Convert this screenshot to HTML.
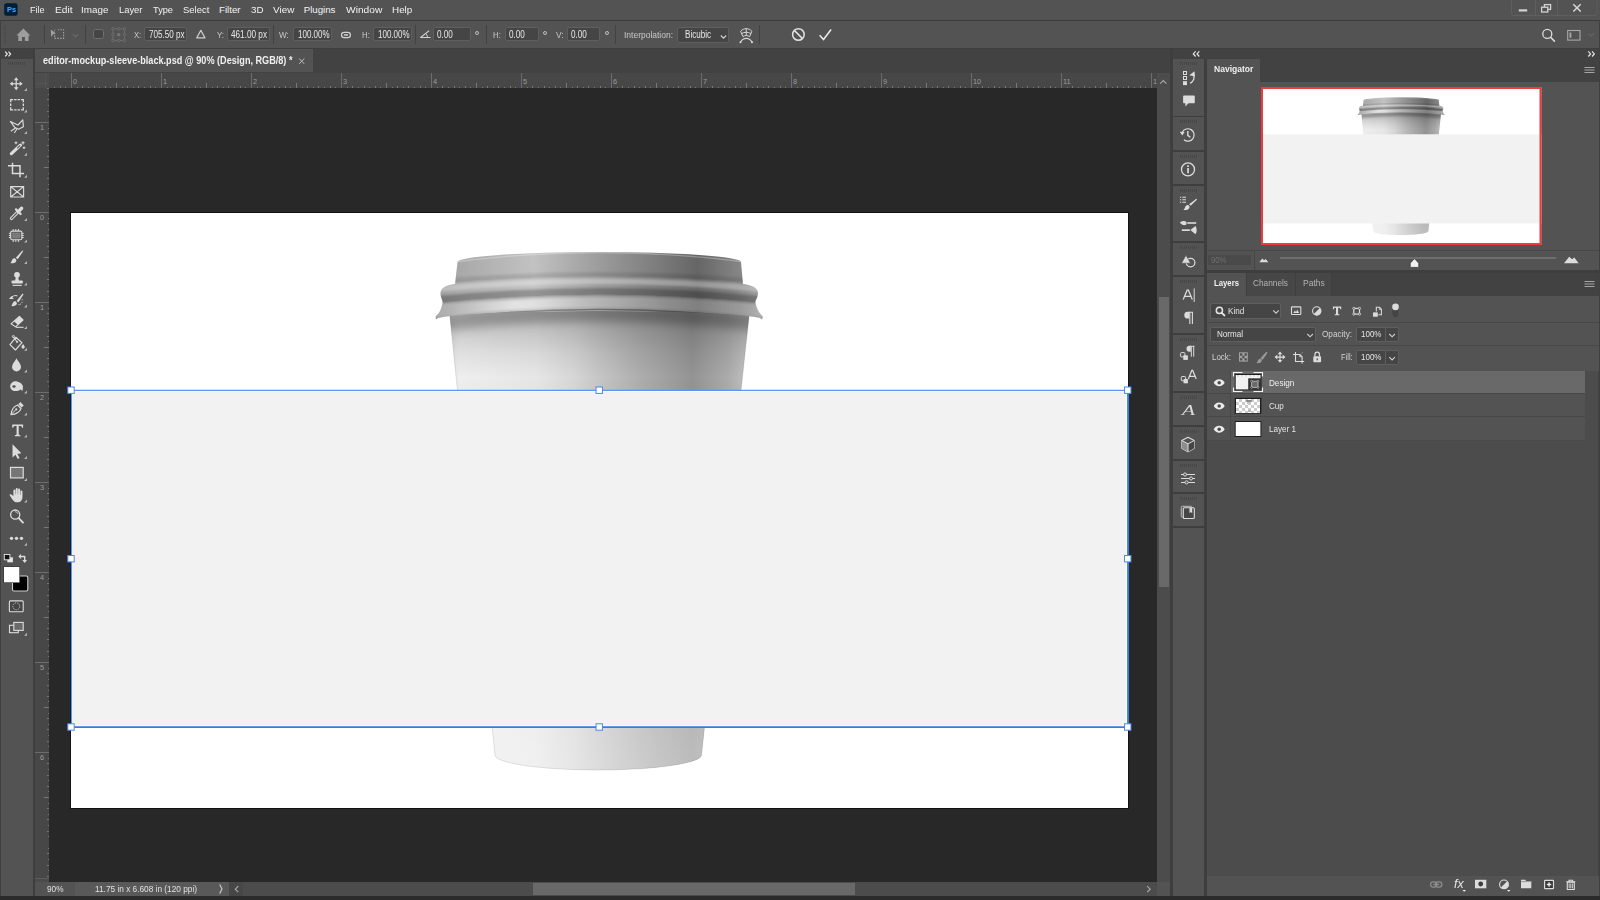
<!DOCTYPE html>
<html lang="en"><head><meta charset="utf-8"><title>editor-mockup-sleeve-black.psd</title>
<style>
html,body{margin:0;padding:0;}
body{width:1600px;height:900px;overflow:hidden;position:relative;background:#535353;font-family:"Liberation Sans",sans-serif;font-size:10px;color:#dcdcdc;}
body>div,body>svg{position:absolute;box-sizing:border-box;}
div div{position:absolute;box-sizing:border-box;}
.t{position:absolute;white-space:pre;line-height:1;transform-origin:0 50%;display:block;}
.f{background:#454545;border:1px solid #5f5f5f;border-radius:2px;}
svg{display:block;overflow:visible;}

</style></head>
<body>
<svg width="0" height="0" style="position:absolute;left:0;top:0">
<defs>
<linearGradient id="lidH" x1="0" x2="1" y1="0" y2="0">
<stop offset="0" stop-color="#9a9a9a"/><stop offset="0.067" stop-color="#a8a8a8"/><stop offset="0.30" stop-color="#c2c2c2"/><stop offset="0.50" stop-color="#9c9c9c"/><stop offset="0.80" stop-color="#666666"/><stop offset="0.93" stop-color="#868686"/><stop offset="1" stop-color="#a2a2a2"/>
</linearGradient>
<linearGradient id="bodyH" x1="0" x2="1" y1="0" y2="0"><stop offset="0" stop-color="#d8d8d8"/><stop offset="0.06" stop-color="#eeeeee"/><stop offset="0.30" stop-color="#e6e6e6"/><stop offset="0.42" stop-color="#d6d6d6"/><stop offset="0.50" stop-color="#c5c5c5"/><stop offset="0.62" stop-color="#aeaeae"/><stop offset="0.79" stop-color="#939393"/><stop offset="0.90" stop-color="#ababab"/><stop offset="1" stop-color="#d0d0d0"/></linearGradient>
<linearGradient id="bodyV" x1="0" x2="0" y1="0" y2="1"><stop offset="0" stop-color="#000" stop-opacity="0.30"/><stop offset="0.06" stop-color="#000" stop-opacity="0.16"/><stop offset="0.11" stop-color="#000" stop-opacity="0.06"/><stop offset="0.16" stop-color="#000" stop-opacity="0"/><stop offset="0.5" stop-color="#fff" stop-opacity="0.12"/><stop offset="1" stop-color="#fff" stop-opacity="0.40"/></linearGradient>
<clipPath id="lidc"><path d="M457.5 262 A141.75 10 0 0 1 741 262 L743 284 C752 285 758 288 758 293 C758 298 755 300 755.5 303 C757 310 760 314 763 316.5 L762 319.5 A163 8.5 0 0 0 436 319.5 L435.5 316.5 C438.5 314 441.5 310 442.5 303 C443 300 440.5 298 440.5 293 C440.5 288 446 285 455 284 Z"/></clipPath>
<clipPath id="bodyc"><path d="M449 308 L750 308 L701.5 755 A103.25 15 0 0 1 495 755 Z"/></clipPath>
<filter id="bl1" x="-5%" y="-50%" width="110%" height="200%"><feGaussianBlur stdDeviation="1.3"/></filter>
<filter id="bl4" x="-5%" y="-100%" width="110%" height="300%"><feGaussianBlur stdDeviation="4"/></filter>
<linearGradient id="lipHL" x1="0" x2="1" y1="0" y2="0"><stop offset="0.08" stop-color="#fff" stop-opacity="0"/><stop offset="0.26" stop-color="#fff" stop-opacity="0.5"/><stop offset="0.45" stop-color="#fff" stop-opacity="0.12"/><stop offset="0.7" stop-color="#fff" stop-opacity="0"/></linearGradient>
<symbol id="cup" viewBox="71 213 1057 595" preserveAspectRatio="none">
<rect x="71" y="213" width="1057" height="595" fill="#fff"/>
<g clip-path="url(#bodyc)">
<rect x="440" y="300" width="320" height="480" fill="url(#bodyH)"/>
<rect x="440" y="300" width="320" height="480" fill="url(#bodyV)"/>
<g filter="url(#bl4)"><path d="M425 318 Q599 294 773 318 L773 333 Q599 311 425 333 Z" fill="#000" fill-opacity="0.22"/></g>
</g>
<path d="M449 308 L750 308 L701.5 755 A103.25 15 0 0 1 495 755 Z" fill="none" stroke="#000" stroke-opacity="0.10" stroke-width="1"/>
<path d="M457.5 262 A141.75 10 0 0 1 741 262 L743 284 C752 285 758 288 758 293 C758 298 755 300 755.5 303 C757 310 760 314 763 316.5 L762 319.5 A163 8.5 0 0 0 436 319.5 L435.5 316.5 C438.5 314 441.5 310 442.5 303 C443 300 440.5 298 440.5 293 C440.5 288 446 285 455 284 Z" fill="url(#lidH)"/>
<g clip-path="url(#lidc)">
<g filter="url(#bl1)">
<path d="M425 280 Q599 264 773 280 L773 286 Q599 270 425 286 Z" fill="#000" fill-opacity="0.10"/>
<path d="M425 286.5 Q599 270.5 773 286.5 L773 293.3 Q599 274.7 425 293.3 Z" fill="#fff" fill-opacity="0.30"/>
<path d="M425 297.3 Q599 278.7 773 297.3 L773 305.3 Q599 286.7 425 305.3 Z" fill="#000" fill-opacity="0.24"/>
<path d="M425 305.8 Q599 287.2 773 305.8 L773 318.7 Q599 297.3 425 318.7 Z" fill="#fff" fill-opacity="0.17"/>
<path d="M425 307.3 Q599 288.7 773 307.3 L773 317.7 Q599 296.3 425 317.7 Z" fill="url(#lipHL)"/>
</g>
<path d="M425 320.6 Q599 298.6 773 320.6" fill="none" stroke="#000" stroke-opacity="0.30" stroke-width="1.5"/>
<path d="M425 322 Q599 300 773 322" fill="none" stroke="#fff" stroke-opacity="0.25" stroke-width="1.2"/>
<path d="M425 266 Q599 239.2 773 266" fill="none" stroke="#fff" stroke-opacity="0.28" stroke-width="1.3"/>
</g>
<rect x="71" y="391" width="1057" height="336" fill="#f2f2f2"/>
</symbol>
</defs>
</svg>

<div style="left:0px;top:0px;width:1600px;height:20px;background:#535353;"></div>
<div style="left:0px;top:20px;width:1600px;height:1px;background:#3d3d3d;"></div>
<div style="left:0px;top:21px;width:1600px;height:27px;background:#535353;"></div>
<div style="left:0px;top:48px;width:1600px;height:852px;background:#3e3e3e;"></div>
<div style="left:0px;top:49px;width:33px;height:10px;background:#424242;"></div>
<div style="left:0px;top:59px;width:33px;height:837px;background:#535353;"></div>
<svg style="left:0;top:0" width="36" height="900" viewBox="0 0 36 900" fill="#dcdcdc" stroke="none">
<!-- header chevrons -->
<path d="M5.200 51.700l2.100 2.300-2.100 2.300M8.500 51.700l2.100 2.300-2.100 2.300" fill="none" stroke="#e6e6e6" stroke-width="1.2"/>
<!-- move -->
<path d="M16.200 77.200l2.300 3h-4.600zM16.200 90.300l-2.300-3h4.600zM9.700 83.800l3-2.300v4.600zM22.700 83.800l-3 2.300v-4.600z"/>
<rect x="15.600" y="79.500" width="1.200" height="8.600"/><rect x="11.900" y="83.200" width="8.600" height="1.200"/>
<!-- marquee -->
<path d="M10.700 102.300V99.600h2.500M14.200 99.600h2.400M17.600 99.600h2.400M21 99.600h2.300v2.700M23.300 103.600v2.400M23.300 107.200v2.600H21M20 109.800h-2.400M16.600 109.800h-2.400M13.200 109.800h-2.500v-2.600M10.700 106v-2.400" fill="none" stroke="#dcdcdc" stroke-width="1.300"/>
<!-- poly lasso -->
<path d="M10.4 121.4L18 125l4.8-5.2.6 7-4.8 2.5-3.7-1.7z" fill="none" stroke="#dcdcdc" stroke-width="1.15" stroke-linejoin="round"/>
<path d="M15.6 128l-4.8 3.3M16.9 129l-2.6 4" fill="none" stroke="#dcdcdc" stroke-width="1.1"/>
<!-- wand -->
<path d="M11.4 153.6l9-8.4" fill="none" stroke="#dcdcdc" stroke-width="3.2" stroke-linecap="round"/>
<path d="M17.6 147.8l2.2-2" fill="none" stroke="#535353" stroke-width="1.1" stroke-linecap="round"/>
<path d="M16 141.4v2.8M14.6 142.8h2.8M23 141.2v3.2M21.4 142.8h3.2M24 146.4v2.6M22.7 147.7h2.6" fill="none" stroke="#dcdcdc" stroke-width="1.1"/>
<!-- crop -->
<path d="M12.5 162.8v10.7H24M8 165.8h12v11.4" fill="none" stroke="#dcdcdc" stroke-width="1.5"/>
<!-- frame -->
<path d="M10.7 186.6h12.9v10.4H10.7zM10.7 186.6l12.9 10.4M23.6 186.6L10.7 197" fill="none" stroke="#dcdcdc" stroke-width="1.15"/>
<!-- eyedropper -->
<path d="M11.5 218.4l6-6" fill="none" stroke="#dcdcdc" stroke-width="3.3" stroke-linecap="round"/>
<path d="M11.6 218.3l5.6-5.6" fill="none" stroke="#535353" stroke-width="1.2" stroke-linecap="round"/>
<path d="M16 209.4l4.6 4.6" fill="none" stroke="#dcdcdc" stroke-width="2.3" stroke-linecap="round"/>
<path d="M18.3 211.6l3.3-3.3" fill="none" stroke="#dcdcdc" stroke-width="3.4" stroke-linecap="round"/>
<!-- patch/object -->
<rect x="10.7" y="231.1" width="11.2" height="8.7" rx="1.6" fill="none" stroke="#dcdcdc" stroke-width="1.1"/>
<rect x="12.1" y="232.5" width="8.4" height="5.9" rx="0.8" fill="#7a7a7a"/>
<path d="M13.2 229v2M15.8 229v2M18.4 229v2M13.2 240v2M15.8 240v2M18.4 240v2M8.9 233.4h2M8.9 235.5h2M8.9 237.5h2M21.7 233.4h2M21.7 235.5h2M21.7 237.5h2" fill="none" stroke="#dcdcdc" stroke-width="1"/>
<!-- brush -->
<path d="M22.4 250.4l.9.7-5.6 8.2-1.9-1.5z"/>
<path d="M15.2 258.4c1.8 1.2 1.5 3.4-.5 4.3-1.6.7-3.4.6-4.4.5 1.5-1.2 1.2-2.6 2.2-3.9.7-.9 1.8-1.5 2.7-.9z"/>
<!-- stamp -->
<circle cx="17" cy="274.8" r="2.9"/><path d="M15.9 277l-.9 4h4l-.9-4z"/><rect x="11.6" y="280.5" width="11.2" height="3.1" rx="0.8"/><rect x="12.6" y="284.8" width="9.2" height="1.1"/>
<!-- history brush -->
<path d="M22.6 293.6l.9.7-5 8-1.9-1.4z"/>
<path d="M15.8 301.4c1.7 1.2 1.4 3.3-.5 4.2-1.5.7-3.3.6-4.2.5 1.4-1.2 1.1-2.5 2.1-3.8.7-.9 1.7-1.5 2.6-.9z"/>
<path d="M9 299l2.4-2.9 2.4 2.9z"/><path d="M12 296.8c1.6-1.3 3.6-1.5 5.4-.9" fill="none" stroke="#dcdcdc" stroke-width="1"/>
<circle cx="22.2" cy="299.8" r=".55"/><circle cx="22" cy="302.2" r=".55"/><circle cx="20.6" cy="304" r=".55"/><circle cx="19" cy="304.6" r=".55"/>
<!-- eraser -->
<path d="M19.4 316.3l3.6 3.7-7.4 6.9-4.6-3.1z" fill="none" stroke="#dcdcdc" stroke-width="1.1" stroke-linejoin="round"/>
<path d="M19.4 316.3l3.6 3.7-5.2 4.8-3.9-3.5z"/>
<path d="M16 327.3h7.6" fill="none" stroke="#dcdcdc" stroke-width="1.1"/>
<!-- bucket -->
<path d="M15.8 337.3l6.2 5.4-6.6 7.3L10 344.6z" fill="none" stroke="#dcdcdc" stroke-width="1.15" stroke-linejoin="round"/>
<path d="M13.4 336.8l3.7 5.2" fill="none" stroke="#dcdcdc" stroke-width="1.1"/><circle cx="13.4" cy="336.6" r="1.1" fill="none" stroke="#dcdcdc" stroke-width=".9"/><circle cx="17.1" cy="342" r="1"/>
<path d="M23.1 344c.9 1.3 1.6 2.1 1.6 3.1a1.6 1.6 0 0 1-3.2 0c0-1 .7-1.8 1.6-3.100z"/>
<!-- blur drop -->
<path d="M16.5 358.3c1.4 3.100 4.500 5.600 4.500 8.600a4.500 4.500 0 0 1-9 0c0-3 3.100-5.500 4.500-8.600z"/>
<!-- sponge -->
<path d="M10.200 386c.3-3.500 3.800-5.200 6.800-4.600 3 .5 5.500 2.600 6 5.100l-.5 4.500-2-1.500c-2.500 2-7.500 2-9 0-1-1-1.400-2.200-1.300-3.500z"/>
<ellipse cx="14" cy="386.400" rx="1.700" ry="1.250" fill="#535353"/>
<!-- pen -->
<path d="M11 414.600c.5-4.600 2.500-8.100 6.500-9.600l3.500 3.500c-1.500 4-5 5.800-10 6.100z" fill="none" stroke="#dcdcdc" stroke-width="1.200" stroke-linejoin="round"/>
<path d="M11.300 414.300l4.700-4.700" fill="none" stroke="#dcdcdc" stroke-width="1"/><circle cx="16.300" cy="409.300" r="1.100"/>
<path d="M18.300 404.200l2.100-2.100 3.300 3.300-2.100 2.100z"/>
<!-- T -->
<path d="M12.200 424.500h10.900v3.300h-1.100c-.1-1.300-.5-1.800-1.800-1.800h-1.500v8c0 .8.400 1.100 1.700 1.200v1h-5.500v-1c1.300-.1 1.700-.4 1.700-1.200v-8h-1.500c-1.300 0-1.700.5-1.800 1.800h-1.100z"/>
<!-- path select -->
<path d="M12.500 444.200v13.400l3-2.800 2.200 4.300 1.900-1-2.200-4.200 4-.6z"/>
<!-- rectangle -->
<rect x="10.500" y="467.400" width="12.700" height="10.500" fill="#767676" stroke="#dcdcdc" stroke-width="1.200"/>
<!-- hand -->
<path d="M13.400 496v-5.600a1 1 0 0 1 2 0v3.800h.35v-5.300a1 1 0 0 1 2 0v5.300h.35v-4.800a1 1 0 0 1 2 0v5.300h.35v-3.300a1 1 0 0 1 2 0v5.600c0 3.200-1.700 5.300-4.900 5.300-2.800 0-4.200-1.400-5.500-3.400l-2.400-3.600c-.4-.9.800-1.600 1.600-.8z"/>
<!-- zoom -->
<circle cx="15.200" cy="514.600" r="4.600" fill="none" stroke="#dcdcdc" stroke-width="1.300"/>
<path d="M18.700 518.100l4.300 4.500" fill="none" stroke="#dcdcdc" stroke-width="1.900" stroke-linecap="round"/>
<path d="M14.800 511.700c1.600-.2 2.900.9 3.200 2.300" fill="none" stroke="#dcdcdc" stroke-width=".8"/>
<!-- dots -->
<circle cx="11.500" cy="538.300" r="1.650"/><circle cx="16.500" cy="538.300" r="1.650"/><circle cx="21.500" cy="538.300" r="1.650"/>
<!-- corner triangles -->
<g fill="#b4b4b4">
<path d="M27 88v3h-3zM27 109.500v3h-3zM27 131v3h-3zM27 152.800v3h-3zM27 174.800v3h-3zM27 217.900v3h-3zM27 239.500v3h-3zM27 261v3h-3zM27 282.600v3h-3zM27 304.600v3h-3zM27 326v3h-3zM27 347.700v3h-3zM27 369.600v3h-3zM27 390.600v3h-3zM27 412.600v3h-3zM27 434.600v3h-3zM27 456v3h-3zM27 478v3h-3zM27 499.500v3h-3zM27 542.800v3h-3zM27 632.700v3h-3z"/>
</g>
<!-- mini default colours -->
<rect x="7.300" y="557.300" width="5.600" height="5" fill="#e6e6e6"/><rect x="4.300" y="554.500" width="5.600" height="5.300" fill="#111" stroke="#e6e6e6" stroke-width=".9"/>
<!-- swap arrows -->
<path d="M18.300 556.500l2.600-2.400v1.700h3.700c.5 0 .8.300.8.800v3.500h1.700l-2.400 2.800-2.400-2.800h1.700v-2.900h-3.100v1.700z"/>
<!-- swatches -->
<rect x="12.500" y="576" width="15.300" height="15" rx="1.500" fill="#000" stroke="#cfcfcf" stroke-width="1.100"/>
<rect x="3.200" y="566.300" width="16.800" height="16.700" fill="#3a3a3a"/>
<rect x="4" y="567" width="15.300" height="15.300" fill="#fff"/>
<!-- quick mask -->
<rect x="9.400" y="600.900" width="13.800" height="10.800" rx="1" fill="#454545" stroke="#dcdcdc" stroke-width="1.100"/>
<circle cx="16.300" cy="606.300" r="3.500" fill="none" stroke="#bdbdbd" stroke-width="1" stroke-dasharray="1.400 1"/>
<!-- screen mode -->
<rect x="9.500" y="625.300" width="8.800" height="7.400" fill="#535353" stroke="#dcdcdc" stroke-width="1.100"/>
<rect x="13.800" y="622.400" width="9.400" height="8" fill="#6a6a6a" stroke="#dcdcdc" stroke-width="1.100"/>
</svg>

<div style="left:8px;top:62px;width:17px;height:3px;background:repeating-linear-gradient(90deg,#474747 0 1px,transparent 1px 2px);"></div>
<div style="left:35px;top:49px;width:1135px;height:24px;background:#424242;"></div>
<div style="left:35px;top:49px;width:278px;height:24px;background:#535353;"></div>
<div style="left:35px;top:72px;width:1135px;height:1px;background:#424242;"></div>
<div style="left:35px;top:73px;width:1122px;height:15px;background:#474747;"></div>
<div style="left:35px;top:88px;width:14px;height:794px;background:#474747;"></div>
<div style="left:35px;top:73px;width:14px;height:15px;background:#4d4d4d;"></div>
<div style="left:35px;top:878px;width:14px;height:1px;background:#5c5c5c;"></div>
<div style="left:35px;top:879px;width:14px;height:3px;background:#4b4b4b;"></div>
<div style="left:49px;top:88px;width:1108px;height:794px;background:#282828;"></div>
<div style="left:1157px;top:73px;width:13px;height:809px;background:#464646;z-index:3;background-image:radial-gradient(circle,#525252 0.6px,transparent 0.8px);background-size:2px 2px;"></div>
<div style="left:1159px;top:297px;width:10px;height:290px;background:#696969;z-index:4;"></div>
<svg style="left:0;top:0;z-index:5" width="1180" height="900" viewBox="0 0 1180 900" fill="none" stroke="#a8a8a8" stroke-width="1.2"><path d="M1160.200 83.600l3.100-3 3.100 3M1147.200 886.200l3 3-3 3M238.300 886.200l-3 3 3 3"/><path d="M219.700 884.600l2.300 4.400-2.300 4.400" stroke="#d0d0d0" stroke-width="1.100"/><path d="M299.200 58.500l5 5.400M304.200 58.500l-5 5.400" stroke="#bdbdbd" stroke-width="1"/></svg>
<div style="left:35px;top:882px;width:1135px;height:14px;background:#474747;"></div>
<div style="left:35px;top:882px;width:40px;height:14px;background:#535353;"></div>
<div style="left:75px;top:882px;width:154px;height:14px;background:#595959;"></div>
<div style="left:243px;top:882px;width:914px;height:14px;background:#464646;background-image:radial-gradient(circle,#525252 0.6px,transparent 0.8px);background-size:2px 2px;"></div>
<div style="left:533px;top:883px;width:322px;height:12px;background:#696969;"></div>
<div style="left:1157px;top:882px;width:13px;height:14px;background:#535353;"></div>
<div style="left:70px;top:212px;width:1059px;height:597px;background:#121212;"></div>
<svg style="left:71px;top:213px" width="1057" height="595"><use href="#cup" x="0" y="0" width="1057" height="595"/></svg>
<svg style="left:0;top:0" width="1160" height="900" viewBox="0 0 1160 900" fill="none"><path d="M72.500 391.500H1126.500V725.800H72.500z" stroke="#fffdf2" stroke-width="1"/><path d="M71.500 390.500V727" stroke="#5c94f4" stroke-width="1.200"/><path d="M71 390.400H1128.500" stroke="#5c94f4" stroke-width="1.100"/><path d="M1128 390V728" stroke="#3f83ec" stroke-width="1.900"/><path d="M71 727.100H1129" stroke="#2f7de8" stroke-width="1.900"/><rect x="67.80" y="387.00" width="6.4" height="6.4" fill="#fff" stroke="#4a86ee" stroke-width="1"/><rect x="67.80" y="555.50" width="6.4" height="6.4" fill="#fff" stroke="#4a86ee" stroke-width="1"/><rect x="67.80" y="723.80" width="6.4" height="6.4" fill="#fff" stroke="#4a86ee" stroke-width="1"/><rect x="596.05" y="387.00" width="6.4" height="6.4" fill="#fff" stroke="#4a86ee" stroke-width="1"/><rect x="596.05" y="723.80" width="6.4" height="6.4" fill="#fff" stroke="#4a86ee" stroke-width="1"/><rect x="1124.55" y="387.00" width="6.4" height="6.4" fill="#fff" stroke="#4a86ee" stroke-width="1"/><rect x="1124.55" y="555.50" width="6.4" height="6.4" fill="#fff" stroke="#4a86ee" stroke-width="1"/><rect x="1124.55" y="723.80" width="6.4" height="6.4" fill="#fff" stroke="#4a86ee" stroke-width="1"/></svg>
<div style="left:1173px;top:49px;width:427px;height:10px;background:#424242;"></div>
<div style="left:1173px;top:59px;width:31px;height:57px;background:#535353;"></div>
<div style="left:1173px;top:117px;width:31px;height:33px;background:#535353;"></div>
<div style="left:1173px;top:152px;width:31px;height:32px;background:#535353;"></div>
<div style="left:1173px;top:186px;width:31px;height:55px;background:#535353;"></div>
<div style="left:1173px;top:243px;width:31px;height:32px;background:#535353;"></div>
<div style="left:1173px;top:277px;width:31px;height:56px;background:#535353;"></div>
<div style="left:1173px;top:335px;width:31px;height:56px;background:#535353;"></div>
<div style="left:1173px;top:393px;width:31px;height:32px;background:#535353;"></div>
<div style="left:1173px;top:427px;width:31px;height:32px;background:#535353;"></div>
<div style="left:1173px;top:461px;width:31px;height:31px;background:#535353;"></div>
<div style="left:1173px;top:494px;width:31px;height:32px;background:#535353;"></div>
<div style="left:1173px;top:528px;width:31px;height:368px;background:#535353;"></div>
<svg style="left:1170px;top:0" width="40" height="900" viewBox="1170 0 40 900" fill="none" stroke="none">
<path d="M1195.600 51.300l-2.300 2.600 2.300 2.600M1199.300 51.300l-2.300 2.600 2.300 2.600" stroke="#e6e6e6" stroke-width="1.200"/>
<!-- actions/history states -->
<rect x="1183.500" y="71.500" width="3" height="3" stroke="#dcdcdc" stroke-width="1"/>
<rect x="1183.500" y="76.500" width="3" height="3" stroke="#dcdcdc" stroke-width="1"/>
<rect x="1183" y="81.200" width="4" height="3.900" fill="#dcdcdc"/>
<path d="M1190.300 83.400c3.600-2.300 5-6.300 2.600-10" stroke="#dcdcdc" stroke-width="1.300"/>
<path d="M1189.300 75.200l5.200-4 .5 5.200z" fill="#dcdcdc"/>
<!-- comment -->
<path d="M1184.200 95.500h9.500c.7 0 1.100.4 1.100 1.100v5.600c0 .7-.4 1.100-1.100 1.100h-5.300l-3 3.200v-3.200h-1.200c-.7 0-1.100-.4-1.100-1.100v-5.600c0-.7.400-1.100 1.100-1.100z" fill="#dcdcdc"/>
<!-- history -->
<path d="M1182.300 132.300a6.200 6.200 0 1 1 1.600 7.400" stroke="#dcdcdc" stroke-width="1.200"/>
<path d="M1179.800 131.800l4.800.2-2.300 3.600z" fill="#dcdcdc"/>
<path d="M1187.800 131v4.300l2.500 2" stroke="#dcdcdc" stroke-width="1.400"/>
<!-- info -->
<circle cx="1188" cy="169.400" r="6.500" stroke="#dcdcdc" stroke-width="1.300"/>
<rect x="1187.200" y="165.300" width="1.700" height="1.700" fill="#dcdcdc"/><rect x="1187.200" y="168" width="1.700" height="5.200" fill="#dcdcdc"/>
<!-- brush settings -->
<path d="M1180 197.300h1.200M1182.300 197.300h3.700M1180 199.800h1.200M1182.300 199.800h3.700M1180 202.300h1.200M1182.300 202.300h3.700" stroke="#dcdcdc" stroke-width="1.100"/>
<path d="M1196.300 198.700l.8.900-6.500 6.200-1.500-1.600z" fill="#dcdcdc"/>
<path d="M1188.500 205.200c1.700 1.300 1.300 3.300-.5 4.200-1.500.7-3.300.7-4.600.5 1.400-1.100 1.300-2.300 2.200-3.600.7-1 1.900-1.700 2.900-1.100z" fill="#dcdcdc"/>
<!-- brushes -->
<path d="M1179.900 222.600c2-1.600 4.700-2.100 6.600-.6v2.600c-2.300 1.300-4.800.5-6.600-2z" fill="#dcdcdc"/><rect x="1187.300" y="222.200" width="8.900" height="1.600" fill="#dcdcdc"/>
<rect x="1181.800" y="229.300" width="8" height="1.700" fill="#dcdcdc"/><path d="M1190.300 230.100l5.200-4.200c1.600 2.600 1.600 5.800 0 8.400z" fill="#dcdcdc"/>
<!-- clone source -->
<circle cx="1190.600" cy="262.600" r="4.300" stroke="#dcdcdc" stroke-width="1.200"/>
<path d="M1186 255.300l4.500 7.900h-9z" fill="#dcdcdc" stroke="#535353" stroke-width=".6"/>
<!-- A| -->
<path d="M1183.200 299.500l3.900-9.300h1.300l3.900 9.300M1184.600 296.300h6.300" stroke="#dcdcdc" stroke-width="1.250"/>
<path d="M1194.200 288.500v13.500" stroke="#dcdcdc" stroke-width="1"/>
<!-- pilcrow -->
<path d="M1188.600 312.300h4.500M1189.800 312.300v11.700M1192.400 312.300v11.700" stroke="#dcdcdc" stroke-width="1.100"/>
<path d="M1189.300 311.800h-1.600a3.400 3.400 0 0 0 0 6.800h1.600z" fill="#dcdcdc"/>
<!-- para styles -->
<path d="M1190 346.300h4.500M1191.300 346.300v10.400M1193.700 346.300v10.400" stroke="#dcdcdc" stroke-width="1"/>
<path d="M1190.800 345.800h-1.300a3 3 0 0 0 0 6h1.300z" fill="#dcdcdc"/>
<rect x="1180.600" y="352.600" width="4.300" height="4.300" rx=".8" stroke="#dcdcdc" stroke-width="1"/>
<rect x="1183.300" y="355.300" width="4.600" height="4.600" fill="#dcdcdc"/>
<!-- char styles -->
<path d="M1188.300 379l3.500-8.600h.9l3.500 8.600M1189.500 376.300h5.500" stroke="#dcdcdc" stroke-width="1.200"/>
<rect x="1181.300" y="376.500" width="4.300" height="4.300" rx=".8" stroke="#dcdcdc" stroke-width="1"/>
<rect x="1183.600" y="379" width="4.300" height="4.300" fill="#dcdcdc"/>
<!-- cube -->
<path d="M1188 437.200l6.200 3.300v7.700l-6.200 3.600-6.200-3.600v-7.700z" stroke="#dcdcdc" stroke-width="1.100" stroke-linejoin="round"/>
<path d="M1181.800 440.500l6.200 3.400v7.900l-6.200-3.600z" fill="#8c8c8c"/><path d="M1188 443.900l6.200-3.400v7.700l-6.200 3.600z" fill="#454545"/>
<path d="M1181.800 440.500l6.200 3.400 6.200-3.400M1188 443.900v7.900" stroke="#dcdcdc" stroke-width="1"/>
<!-- adjustments -->
<path d="M1181 474.500h14M1181 478.500h14M1181 482.400h14" stroke="#dcdcdc" stroke-width="1.050"/>
<circle cx="1185" cy="474.500" r="1.550" fill="#535353" stroke="#dcdcdc" stroke-width="1"/><circle cx="1191" cy="478.500" r="1.550" fill="#535353" stroke="#dcdcdc" stroke-width="1"/><circle cx="1186.600" cy="482.400" r="1.550" fill="#535353" stroke="#dcdcdc" stroke-width="1"/>
<!-- libraries -->
<rect x="1181.300" y="506.300" width="10.500" height="11" rx="1" stroke="#bdbdbd" stroke-width="1"/>
<rect x="1183.300" y="507.800" width="11" height="10.700" rx="1" fill="#474747" stroke="#dcdcdc" stroke-width="1.100"/>
<path d="M1189.500 507.800h2.700v5.500l-1.350-1.200-1.350 1.200z" fill="#dcdcdc"/>
</svg>

<div style="left:1180px;top:62px;width:17px;height:3px;background:repeating-linear-gradient(90deg,#474747 0 1px,transparent 1px 2px);"></div>
<div style="left:1180px;top:120px;width:17px;height:3px;background:repeating-linear-gradient(90deg,#474747 0 1px,transparent 1px 2px);"></div>
<div style="left:1180px;top:155px;width:17px;height:3px;background:repeating-linear-gradient(90deg,#474747 0 1px,transparent 1px 2px);"></div>
<div style="left:1180px;top:189px;width:17px;height:3px;background:repeating-linear-gradient(90deg,#474747 0 1px,transparent 1px 2px);"></div>
<div style="left:1180px;top:246px;width:17px;height:3px;background:repeating-linear-gradient(90deg,#474747 0 1px,transparent 1px 2px);"></div>
<div style="left:1180px;top:280px;width:17px;height:3px;background:repeating-linear-gradient(90deg,#474747 0 1px,transparent 1px 2px);"></div>
<div style="left:1180px;top:338px;width:17px;height:3px;background:repeating-linear-gradient(90deg,#474747 0 1px,transparent 1px 2px);"></div>
<div style="left:1180px;top:396px;width:17px;height:3px;background:repeating-linear-gradient(90deg,#474747 0 1px,transparent 1px 2px);"></div>
<div style="left:1180px;top:430px;width:17px;height:3px;background:repeating-linear-gradient(90deg,#474747 0 1px,transparent 1px 2px);"></div>
<div style="left:1180px;top:464px;width:17px;height:3px;background:repeating-linear-gradient(90deg,#474747 0 1px,transparent 1px 2px);"></div>
<div style="left:1180px;top:497px;width:17px;height:3px;background:repeating-linear-gradient(90deg,#474747 0 1px,transparent 1px 2px);"></div>
<div style="left:1207px;top:59px;width:393px;height:23px;background:#424242;"></div>
<div style="left:1207px;top:59px;width:52.5px;height:23px;background:#535353;"></div>
<div style="left:1207px;top:82px;width:393px;height:188px;background:#535353;"></div>
<div style="left:1207px;top:250px;width:393px;height:1px;background:#474747;"></div>
<svg style="left:1261px;top:87px" width="280.5" height="158"><use href="#cup" x="0" y="0" width="280.5" height="158"/><rect x="1" y="1" width="278.5" height="156" fill="none" stroke="#ee3b3b" stroke-width="2"/></svg>
<div style="left:1208px;top:255px;width:43px;height:10px;background:#4a4a4a;"></div>
<div style="left:1254px;top:251px;width:1px;height:19px;background:#474747;"></div>
<div style="left:1280px;top:257px;width:276px;height:2px;background:#6e6e6e;"></div>
<div style="left:1207px;top:273px;width:393px;height:23px;background:#424242;"></div>
<div style="left:1207px;top:273px;width:39px;height:23px;background:#535353;"></div>
<div style="left:1246px;top:273px;width:50px;height:23px;background:#474747;border-left:1px solid #3f3f3f;border-right:1px solid #3f3f3f;"></div>
<div style="left:1296px;top:273px;width:36px;height:23px;background:#474747;border-right:1px solid #3f3f3f;"></div>
<div style="left:1207px;top:296px;width:393px;height:600px;background:#535353;"></div>
<div style="left:1207px;top:322px;width:393px;height:1px;background:#474747;"></div>
<div style="left:1207px;top:345px;width:393px;height:1px;background:#484848;"></div>
<div style="left:1207px;top:371px;width:393px;height:505px;background:#4c4c4c;"></div>
<div style="left:1207px;top:371px;width:378px;height:22px;background:#535353;"></div>
<div style="left:1231px;top:371px;width:354px;height:21.5px;background:#696969;"></div>
<div style="left:1207px;top:393px;width:378px;height:1px;background:#484848;"></div>
<div style="left:1207px;top:394px;width:378px;height:22px;background:#535353;"></div>
<div style="left:1207px;top:416px;width:378px;height:1px;background:#484848;"></div>
<div style="left:1207px;top:417px;width:378px;height:22.5px;background:#535353;"></div>
<div style="left:1207px;top:439.5px;width:378px;height:1px;background:#484848;"></div>
<div style="left:1230px;top:371px;width:1px;height:68px;background:#484848;"></div>
<div style="left:1585px;top:371px;width:13px;height:505px;background:#464646;background-image:radial-gradient(circle,#525252 0.6px,transparent 0.8px);background-size:2px 2px;"></div>
<div style="left:1598px;top:371px;width:2px;height:505px;background:#424242;"></div>
<div class="f" style="left:1210px;top:303px;width:71px;height:16px"></div>
<div class="f" style="left:1210px;top:327px;width:106px;height:15px"></div>
<div class="f" style="left:1356px;top:327px;width:30px;height:15px;border-radius:2px 0 0 2px"></div>
<div class="f" style="left:1385px;top:327px;width:14px;height:15px;border-radius:0 2px 2px 0"></div>
<div class="f" style="left:1356px;top:350px;width:30px;height:15px;border-radius:2px 0 0 2px"></div>
<div class="f" style="left:1385px;top:350px;width:14px;height:15px;border-radius:0 2px 2px 0"></div>
<svg style="left:1205px;top:0" width="395" height="900" viewBox="1205 0 395 900" fill="none" stroke="none">
<!-- header chevrons right -->
<path d="M1588.300 51.300l2.300 2.600-2.300 2.600M1592 51.300l2.300 2.600-2.300 2.600" stroke="#e6e6e6" stroke-width="1.200"/>
<!-- panel menus -->
<path d="M1584.500 67.500h10M1584.500 70h10M1584.500 72.500h10M1584.500 281.500h10M1584.500 284h10M1584.500 286.500h10" stroke="#a6a6a6" stroke-width="1.100"/>
<!-- navigator slider -->
<path d="M1259.300 262.300l3-3.700 1.800 1.600 1.600-1.200 2.600 3.300z" fill="#dcdcdc"/>
<path d="M1564 263.300l5.200-6.600 2.800 2.600 2.300-1.800 4.300 5.800z" fill="#dcdcdc"/>
<path d="M1414.500 258.600l4.300 4.600v3.200a1 1 0 0 1-1 1h-6.600a1 1 0 0 1-1-1v-3.200z" fill="#f2f2f2" stroke="#333" stroke-width=".8"/>
<!-- search icon -->
<circle cx="1219.400" cy="310.400" r="3.100" stroke="#e6e6e6" stroke-width="1.500"/>
<path d="M1221.700 312.800l2.800 2.700" stroke="#e6e6e6" stroke-width="1.800" stroke-linecap="round"/>
<path d="M1273.200 310.400l2.800 2.800 2.800-2.800M1307.300 334l2.800 2.800 2.800-2.800M1389.300 334l2.800 2.800 2.800-2.800M1389.300 357.200l2.800 2.800 2.800-2.800" stroke="#d0d0d0" stroke-width="1.100"/>
<!-- filter icons -->
<rect x="1291.500" y="306.900" width="9.300" height="7.600" rx=".6" stroke="#dcdcdc" stroke-width="1.100"/>
<path d="M1293.300 312.900l1.500-2.500 1.200 1.500 1.400-2.100 1.700 3.100z" fill="#dcdcdc"/>
<circle cx="1316.750" cy="311" r="4.200" stroke="#dcdcdc" stroke-width="1.100"/>
<path d="M1319.850 308.100a4.200 4.200 0 0 1-6 6z" fill="#dcdcdc"/>
<path d="M1332.900 306.500h8.300v2.700h-1c-.1-1-.4-1.400-1.400-1.400h-.7v5.600c0 .6.300.8 1.300.9v.9h-4.700v-.9c1-.1 1.300-.3 1.300-.9v-5.600h-.7c-1 0-1.300.4-1.400 1.400h-1z" fill="#dcdcdc"/>
<rect x="1353.800" y="308.400" width="5.700" height="5.700" stroke="#dcdcdc" stroke-width="1.200"/>
<g fill="#535353" stroke="#dcdcdc" stroke-width=".8"><circle cx="1353.800" cy="308.400" r="1.100"/><circle cx="1359.500" cy="308.400" r="1.100"/><circle cx="1353.800" cy="314.100" r="1.100"/><circle cx="1359.500" cy="314.100" r="1.100"/></g>
<path d="M1376.300 311.500v-4.300h3.300l1.800 1.900v5.700h-3" stroke="#dcdcdc" stroke-width="1.050"/>
<path d="M1379.300 307.200v2.200h2.100" stroke="#dcdcdc" stroke-width=".8"/>
<rect x="1373" y="312.400" width="4.800" height="4.300" fill="#dcdcdc"/>
<rect x="1391.800" y="303.800" width="7.400" height="14.300" rx="3.700" fill="#454545" stroke="#5c5c5c" stroke-width=".8"/>
<circle cx="1395.500" cy="306.900" r="3.300" fill="#dcdcdc"/>
<!-- lock icons -->
<rect x="1239" y="352.300" width="8.800" height="9.300" fill="#a2a2a2"/>
<path d="M1240 353.300h2.300v2.400h-2.300zM1244.500 353.300h2.300v2.400h-2.300zM1242.300 355.700h2.200v2.500h-2.200zM1240 358.200h2.300v2.400h-2.300zM1244.500 358.200h2.300v2.400h-2.300z" fill="#505050"/>
<path d="M1266.300 351.700l1.200 1-5 7.200-2-1.600z" fill="#9a9a9a"/>
<path d="M1260.600 358.800c1.700 1.100 1.500 3.100-.3 3.900-1.400.6-2.900.5-3.800.3 1.200-1 1.100-2.100 1.900-3.200.6-.8 1.400-1.400 2.200-1z" fill="#9a9a9a"/>
<path d="M1280 351.500l2.300 2.800h-4.600zM1280 362.700l-2.300-2.800h4.600zM1274.500 357.100l2.800-2.300v4.600zM1285.500 357.100l-2.800 2.300v-4.600z" fill="#dcdcdc"/>
<path d="M1280 353.500v7.200M1276.500 357.100h7" stroke="#dcdcdc" stroke-width="1.200"/>
<path d="M1295.500 352v9.500h8.700M1293 354.500h6.800l2.300 2.300v6.700" stroke="#dcdcdc" stroke-width="1.100"/>
<path d="M1299.800 354.500v2.300h2.300" stroke="#dcdcdc" stroke-width=".8"/>
<path d="M1301.500 353.300l1.300-1.300" stroke="#dcdcdc" stroke-width=".9" stroke-dasharray="1 .7"/>
<rect x="1313.300" y="356.300" width="7.800" height="6" rx=".7" fill="#dcdcdc"/>
<path d="M1314.900 356.300v-1.800a2.300 2.300 0 0 1 4.600 0v1.800" stroke="#dcdcdc" stroke-width="1.200"/>
<rect x="1316.600" y="358.300" width="1.300" height="2" fill="#535353"/>
<!-- eyes -->
<g id="eye1"><path d="M1213.700 382.800c2.500-4.600 8.500-4.600 11 0-2.500 4.600-8.500 4.600-11 0z" fill="#ececec"/><circle cx="1219.200" cy="382.800" r="1.750" fill="#4a4a4a"/></g>
<path d="M1213.700 406c2.500-4.600 8.500-4.600 11 0-2.500 4.600-8.500 4.600-11 0z" fill="#ececec"/><circle cx="1219.200" cy="406" r="1.750" fill="#4a4a4a"/>
<path d="M1213.700 429.200c2.500-4.600 8.500-4.600 11 0-2.500 4.600-8.500 4.600-11 0z" fill="#ececec"/><circle cx="1219.200" cy="429.200" r="1.750" fill="#4a4a4a"/>
<!-- design thumb -->
<rect x="1234.700" y="374" width="26.800" height="16.400" fill="#1e1e1e"/>
<rect x="1235.700" y="375" width="24.800" height="14.400" fill="#f4f4f4"/>
<path d="M1237 375h2v1.600h-2zM1241 375h2v1.600h-2zM1245 375h2v1.600h-2zM1249 375h2v1.600h-2zM1253 375h2v1.600h-2zM1257 375h2v1.600h-2z" fill="#d4d4d4"/>
<rect x="1236.500" y="377.200" width="11.500" height="11" fill="#f1f1f1"/>
<rect x="1248.200" y="378.300" width="12.800" height="11.600" fill="#333"/>
<rect x="1251.600" y="381.200" width="6.400" height="6.200" fill="#6a6a6a" stroke="#b4b4b4" stroke-width="1"/>
<g fill="#333" stroke="#b4b4b4" stroke-width=".7"><circle cx="1251.600" cy="381.200" r="1"/><circle cx="1258" cy="381.200" r="1"/><circle cx="1251.600" cy="387.400" r="1"/><circle cx="1258" cy="387.400" r="1"/></g>
<path d="M1233.500 376.500v-4h9M1253.500 372.500h9v4M1262.500 387.500v4h-9M1242.500 391.500h-9v-4" stroke="#f4f4f4" stroke-width="1.100"/>
<!-- cup thumb -->
<rect x="1234.700" y="397.800" width="26.700" height="15.800" fill="#1e1e1e"/>
<!-- layer1 thumb -->
<rect x="1234.700" y="421" width="26.700" height="16" fill="#1e1e1e"/>
<rect x="1235.700" y="422" width="24.700" height="14" fill="#fff"/>
<!-- bottom bar -->
<g stroke="#8e8e8e" stroke-width="1.200"><rect x="1430.600" y="881.800" width="6.300" height="5.300" rx="2.650"/><rect x="1435.500" y="881.800" width="6.300" height="5.300" rx="2.650"/></g>
<rect x="1433.300" y="883.800" width="5.800" height="1.300" fill="#8e8e8e"/>
<path d="M1462.500 890h3.500l-1.750 1.800zM1507 890h3.500l-1.750 1.800z" fill="#f0f0f0"/>
<rect x="1475" y="879.800" width="11.300" height="8.500" fill="#dcdcdc"/><circle cx="1480.700" cy="884" r="2.400" fill="#3c3c3c"/>
<circle cx="1504" cy="884.400" r="4.400" stroke="#dcdcdc" stroke-width="1.100"/>
<path d="M1507.200 881.300a4.400 4.400 0 0 1-6.300 6.300z" fill="#dcdcdc"/>
<path d="M1521 879.800h4.300l.7 1.300h5.300v7.200H1521z" fill="#dcdcdc"/>
<path d="M1521 881.600h10.300" stroke="#535353" stroke-width=".5"/>
<rect x="1544.600" y="880.300" width="8.900" height="8.400" rx=".6" fill="#383838" stroke="#dcdcdc" stroke-width="1.200"/>
<path d="M1549.050 882.300v4.400M1546.850 884.500h4.400" stroke="#f0f0f0" stroke-width="1.300"/>
<path d="M1566.300 881.800h9M1569 881.500v-1.200h3.600v1.200" stroke="#dcdcdc" stroke-width="1.100"/>
<path d="M1567.300 882.300h7v7.200h-7z" stroke="#dcdcdc" stroke-width="1.100"/>
<path d="M1569.200 883.500v4.800M1570.800 883.500v4.800M1572.400 883.500v4.800" stroke="#dcdcdc" stroke-width=".9"/>
</svg>

<div style="left:1235.7px;top:398.8px;width:24.7px;height:13.8px;background:#fff;background-image:linear-gradient(45deg,#ccc 25%,transparent 25%,transparent 75%,#ccc 75%),linear-gradient(45deg,#ccc 25%,transparent 25%,transparent 75%,#ccc 75%);background-size:6px 6px;background-position:0 0,3px 3px;"></div>
<div style="left:1245.5px;top:399.6px;width:6.5px;height:2.4px;background:#7a7a7a;border-radius:1px;opacity:.85;"></div>
<div style="left:1246.5px;top:402px;width:4.5px;height:1.5px;background:#c4c4c4;"></div>
<div style="left:1247.5px;top:409.8px;width:3.5px;height:1.8px;background:#b0b0b0;border-radius:0 0 1px 1px;"></div>
<div style="left:0px;top:21px;width:1px;height:875px;background:#404040;"></div>
<div style="left:1599px;top:21px;width:1px;height:875px;background:#404040;"></div>
<div style="left:0px;top:896px;width:1600px;height:4px;background:#2b2b2b;"></div>
<div class="f" style="left:144px;top:27px;width:43px;height:14px"></div>
<div class="f" style="left:227px;top:27px;width:43px;height:14px"></div>
<div class="f" style="left:293px;top:27px;width:39px;height:14px"></div>
<div class="f" style="left:373px;top:27px;width:39px;height:14px"></div>
<div class="f" style="left:433px;top:27px;width:38px;height:14px"></div>
<div class="f" style="left:505px;top:27px;width:34px;height:14px"></div>
<div class="f" style="left:567px;top:27px;width:33px;height:14px"></div>
<div class="f" style="left:677px;top:27px;width:52px;height:16px"></div>
<div class="f" style="left:93px;top:29px;width:11px;height:10px;border-radius:2.5px;border-color:#707070"></div>
<div style="left:44px;top:25px;width:1px;height:19px;background:#424242;"></div>
<div style="left:85px;top:25px;width:1px;height:19px;background:#424242;"></div>
<div style="left:273px;top:25px;width:1px;height:19px;background:#424242;"></div>
<div style="left:415px;top:25px;width:1px;height:19px;background:#424242;"></div>
<div style="left:486px;top:25px;width:1px;height:19px;background:#424242;"></div>
<div style="left:615px;top:25px;width:1px;height:19px;background:#424242;"></div>
<div style="left:759px;top:25px;width:1px;height:19px;background:#424242;"></div>
<svg style="left:0;top:0" width="1600" height="49" viewBox="0 0 1600 49" fill="none" stroke="none">
<!-- grip -->
<path d="M5 26v18" stroke="#484848" stroke-width="2" stroke-dasharray="1 1"/>
<!-- home -->
<path d="M23.400 28.600l7 6.900h-1.800v5.500h-3.700v-4h-2.900v4h-3.700v-5.500h-1.800z" fill="#9e9e9e"/>
<!-- transform icon -->
<path d="M50.800 29.700l5 3.900-2.900.5-1.400 2.600z" fill="#a2a2a2"/>
<rect x="54.600" y="29.700" width="9" height="8.700" stroke="#a2a2a2" stroke-width="1.100" stroke-dasharray="1.500 1.300"/>
<rect x="54.600" y="29.200" width="3.400" height="5" fill="#535353"/>
<path d="M50.800 29.700l5 3.900-2.900.5-1.400 2.600z" fill="#a2a2a2"/>
<path d="M72.800 34.300l2.600 2.500 2.600-2.500" stroke="#6c6c6c" stroke-width="1.100"/>
<!-- ref point grid -->
<g stroke="#6f6f6f" stroke-width=".9">
<path d="M114.400 28.800h2.900M120.100 28.800h2.900M114.400 40.500h2.900M120.100 40.500h2.900M113 30.200v3.100M113 36.200v2.900M124.400 30.200v3.100M124.400 36.200v2.900"/>
<circle cx="113" cy="28.800" r="1.350"/><circle cx="118.700" cy="28.800" r="1.350"/><circle cx="124.400" cy="28.800" r="1.350"/>
<circle cx="113" cy="34.700" r="1.350"/><circle cx="124.400" cy="34.700" r="1.350"/>
<circle cx="113" cy="40.500" r="1.350"/><circle cx="118.700" cy="40.500" r="1.350"/><circle cx="124.400" cy="40.500" r="1.350"/>
</g>
<rect x="117.200" y="33.200" width="3" height="3" fill="#757575"/>
<!-- delta triangle -->
<path d="M200.850 30.300l4.100 7.600h-8.200z" stroke="#cfcfcf" stroke-width="1.200" stroke-linejoin="round"/>
<!-- link -->
<rect x="341.500" y="32.300" width="8.900" height="5.300" rx="2.650" stroke="#d2d2d2" stroke-width="1.200"/>
<rect x="343.900" y="34.200" width="4.100" height="1.500" fill="#d2d2d2"/>
<!-- angle -->
<path d="M429.200 30.600l-8.600 6.900h9.900" stroke="#cfcfcf" stroke-width="1.150" stroke-linejoin="round"/>
<path d="M425.900 33.500c1 1.100 1.500 2.400 1.600 3.900" stroke="#cfcfcf" stroke-width="1"/>
<!-- dropdown chevron -->
<path d="M720.800 35.500l2.700 2.700 2.700-2.700" stroke="#d0d0d0" stroke-width="1.100"/>
<!-- warp -->
<g stroke="#d6d6d6" stroke-width="1">
<path d="M740.600 31.300c3.300-3.600 8-3.600 11.300 0l-2.300 5.300c-2-1.400-4.700-1.400-6.700 0z" stroke-linejoin="round"/>
<path d="M746.250 28.600v7M741.600 33.600c3-1.800 6.300-1.800 9.300 0"/>
<path d="M740.500 42c3-4.800 8.500-4.800 11.500 0" stroke-width="1.150"/>
</g>
<circle cx="740.500" cy="42.200" r="1" fill="#e0e0e0"/><circle cx="752" cy="42.200" r="1" fill="#e0e0e0"/>
<!-- cancel -->
<circle cx="798.400" cy="34.500" r="5.800" stroke="#e2e2e2" stroke-width="1.500"/>
<path d="M794.300 30.400l8.200 8.200" stroke="#e2e2e2" stroke-width="1.500"/>
<!-- commit -->
<path d="M819.600 35.300l3.900 4.200 7.600-10.100" stroke="#e8e8e8" stroke-width="1.600"/>
<!-- search -->
<circle cx="1547.300" cy="33.900" r="4.500" stroke="#dcdcdc" stroke-width="1.300"/>
<path d="M1550.600 37.300l3.800 3.800" stroke="#dcdcdc" stroke-width="1.600" stroke-linecap="round"/>
<!-- workspace -->
<rect x="1567.700" y="30.500" width="12.300" height="9.600" stroke="#a8a8a8" stroke-width="1.100"/>
<rect x="1569.500" y="32.500" width="1.800" height="5.300" fill="#a8a8a8"/>
<path d="M1588.600 33.300l2.700 2.600 2.700-2.600" stroke="#666" stroke-width="1.100"/>
<!-- window controls -->
<path d="M1511.500 0v13.500a2 2 0 0 0 2 2h81.500a2 2 0 0 0 2-2V0M1535.500 0v15.500M1557.500 0v15.500" stroke="#5f5f5f" stroke-width="1"/>
<rect x="1518.800" y="9.300" width="8.400" height="2.200" fill="#d4d4d4"/>
<rect x="1544.400" y="4.600" width="6.200" height="4.800" stroke="#d4d4d4" stroke-width="1.300"/>
<rect x="1541.600" y="7.200" width="6.200" height="4.800" fill="#535353" stroke="#d4d4d4" stroke-width="1.300"/>
<path d="M1573.300 4.300l7.400 7.200M1580.700 4.300l-7.400 7.200" stroke="#d8d8d8" stroke-width="1.500"/>
<!-- Ps logo -->
<rect x="4.200" y="3.200" width="13.400" height="12.600" rx="2.300" fill="#001e36"/>
</svg>

<div style="left:475px;top:31px;width:4px;height:4px;border:1px solid #bdbdbd;border-radius:50%"></div>
<div style="left:542.5px;top:31px;width:4px;height:4px;border:1px solid #bdbdbd;border-radius:50%"></div>
<div style="left:604.5px;top:31px;width:4px;height:4px;border:1px solid #bdbdbd;border-radius:50%"></div>
<svg style="left:0;top:0" width="1160" height="890" viewBox="0 0 1160 890" fill="none" shape-rendering="crispEdges"><path d="M54.5 87V88M60.5 86V88M65.5 87V88M77.5 87V88M82.5 86V88M88.5 87V88M94.5 86V88M99.5 87V88M105.5 86V88M110.5 87V88M116.5 83V88M122.5 87V88M127.5 86V88M133.5 87V88M138.5 86V88M144.5 87V88M150.5 86V88M155.5 87V88M167.5 87V88M172.5 86V88M178.5 87V88M184.5 86V88M189.5 87V88M195.5 86V88M200.5 87V88M206.5 83V88M212.5 87V88M217.5 86V88M223.5 87V88M228.5 86V88M234.5 87V88M240.5 86V88M245.5 87V88M257.5 87V88M262.5 86V88M268.5 87V88M274.5 86V88M279.5 87V88M285.5 86V88M290.5 87V88M296.5 83V88M302.5 87V88M307.5 86V88M313.5 87V88M318.5 86V88M324.5 87V88M330.5 86V88M335.5 87V88M347.5 87V88M352.5 86V88M358.5 87V88M364.5 86V88M369.5 87V88M375.5 86V88M380.5 87V88M386.5 83V88M392.5 87V88M397.5 86V88M403.5 87V88M408.5 86V88M414.5 87V88M420.5 86V88M425.5 87V88M437.5 87V88M442.5 86V88M448.5 87V88M454.5 86V88M459.5 87V88M465.5 86V88M470.5 87V88M476.5 83V88M482.5 87V88M487.5 86V88M493.5 87V88M498.5 86V88M504.5 87V88M510.5 86V88M515.5 87V88M527.5 87V88M532.5 86V88M538.5 87V88M544.5 86V88M549.5 87V88M555.5 86V88M560.5 87V88M566.5 83V88M572.5 87V88M577.5 86V88M583.5 87V88M588.5 86V88M594.5 87V88M600.5 86V88M605.5 87V88M617.5 87V88M622.5 86V88M628.5 87V88M634.5 86V88M639.5 87V88M645.5 86V88M650.5 87V88M656.5 83V88M662.5 87V88M667.5 86V88M673.5 87V88M678.5 86V88M684.5 87V88M690.5 86V88M695.5 87V88M707.5 87V88M712.5 86V88M718.5 87V88M724.5 86V88M729.5 87V88M735.5 86V88M740.5 87V88M746.5 83V88M752.5 87V88M757.5 86V88M763.5 87V88M768.5 86V88M774.5 87V88M780.5 86V88M785.5 87V88M797.5 87V88M802.5 86V88M808.5 87V88M814.5 86V88M819.5 87V88M825.5 86V88M830.5 87V88M836.5 83V88M842.5 87V88M847.5 86V88M853.5 87V88M858.5 86V88M864.5 87V88M870.5 86V88M875.5 87V88M887.5 87V88M892.5 86V88M898.5 87V88M904.5 86V88M909.5 87V88M915.5 86V88M920.5 87V88M926.5 83V88M932.5 87V88M937.5 86V88M943.5 87V88M948.5 86V88M954.5 87V88M960.5 86V88M965.5 87V88M977.5 87V88M982.5 86V88M988.5 87V88M994.5 86V88M999.5 87V88M1005.5 86V88M1010.5 87V88M1016.5 83V88M1022.5 87V88M1027.5 86V88M1033.5 87V88M1038.5 86V88M1044.5 87V88M1050.5 86V88M1055.5 87V88M1067.5 87V88M1072.5 86V88M1078.5 87V88M1084.5 86V88M1089.5 87V88M1095.5 86V88M1100.5 87V88M1106.5 83V88M1112.5 87V88M1117.5 86V88M1123.5 87V88M1128.5 86V88M1134.5 87V88M1140.5 86V88M1145.5 87V88M47 88.5H49M48 94.5H49M47 99.5H49M48 105.5H49M47 111.5H49M48 116.5H49M48 128.5H49M47 133.5H49M48 139.5H49M47 145.5H49M48 150.5H49M47 156.5H49M48 161.5H49M44 167.5H49M48 173.5H49M47 178.5H49M48 184.5H49M47 189.5H49M48 195.5H49M47 201.5H49M48 206.5H49M48 218.5H49M47 223.5H49M48 229.5H49M47 235.5H49M48 240.5H49M47 246.5H49M48 251.5H49M44 257.5H49M48 263.5H49M47 268.5H49M48 274.5H49M47 279.5H49M48 285.5H49M47 291.5H49M48 296.5H49M48 308.5H49M47 313.5H49M48 319.5H49M47 325.5H49M48 330.5H49M47 336.5H49M48 341.5H49M44 347.5H49M48 353.5H49M47 358.5H49M48 364.5H49M47 369.5H49M48 375.5H49M47 381.5H49M48 386.5H49M48 398.5H49M47 403.5H49M48 409.5H49M47 415.5H49M48 420.5H49M47 426.5H49M48 431.5H49M44 437.5H49M48 443.5H49M47 448.5H49M48 454.5H49M47 459.5H49M48 465.5H49M47 471.5H49M48 476.5H49M48 488.5H49M47 493.5H49M48 499.5H49M47 505.5H49M48 510.5H49M47 516.5H49M48 521.5H49M44 527.5H49M48 533.5H49M47 538.5H49M48 544.5H49M47 549.5H49M48 555.5H49M47 561.5H49M48 566.5H49M48 578.5H49M47 583.5H49M48 589.5H49M47 595.5H49M48 600.5H49M47 606.5H49M48 611.5H49M44 617.5H49M48 623.5H49M47 628.5H49M48 634.5H49M47 639.5H49M48 645.5H49M47 651.5H49M48 656.5H49M48 668.5H49M47 673.5H49M48 679.5H49M47 685.5H49M48 690.5H49M47 696.5H49M48 701.5H49M44 707.5H49M48 713.5H49M47 718.5H49M48 724.5H49M47 729.5H49M48 735.5H49M47 741.5H49M48 746.5H49M48 758.5H49M47 763.5H49M48 769.5H49M47 775.5H49M48 780.5H49M47 786.5H49M48 791.5H49M44 797.5H49M48 803.5H49M47 808.5H49M48 814.5H49M47 819.5H49M48 825.5H49M47 831.5H49M48 836.5H49M48 848.5H49M47 853.5H49M48 859.5H49M47 865.5H49M48 870.5H49M47 876.5H49" stroke="#787878"/><path d="M71.5 73V88M161.5 73V88M251.5 73V88M341.5 73V88M431.5 73V88M521.5 73V88M611.5 73V88M701.5 73V88M791.5 73V88M881.5 73V88M971.5 73V88M1061.5 73V88M1151.5 73V88M35 122.5H49M35 212.5H49M35 302.5H49M35 392.5H49M35 482.5H49M35 572.5H49M35 662.5H49M35 752.5H49" stroke="#6c6c6c"/><path d="M36 83.500H48M45.500 74V87" stroke="#5b5b5b" stroke-dasharray="1 1"/></svg>
<span class="t" style="left:7px;top:6.25px;font-size:7.5px;color:#31a8ff;font-weight:bold;">Ps</span>
<span class="t" style="left:29.8px;top:4.79px;font-size:9.7px;color:#f2f2f2;transform:scaleX(0.9353);">File</span>
<span class="t" style="left:55.0px;top:4.79px;font-size:9.7px;color:#f2f2f2;transform:scaleX(1.0483);">Edit</span>
<span class="t" style="left:81.2px;top:4.79px;font-size:9.7px;color:#f2f2f2;transform:scaleX(1.0177);">Image</span>
<span class="t" style="left:118.7px;top:4.79px;font-size:9.7px;color:#f2f2f2;transform:scaleX(0.9656);">Layer</span>
<span class="t" style="left:152.5px;top:4.79px;font-size:9.7px;color:#f2f2f2;transform:scaleX(0.9523);">Type</span>
<span class="t" style="left:183.0px;top:4.79px;font-size:9.7px;color:#f2f2f2;transform:scaleX(0.9768);">Select</span>
<span class="t" style="left:219.0px;top:4.79px;font-size:9.7px;color:#f2f2f2;">Filter</span>
<span class="t" style="left:250.5px;top:4.79px;font-size:9.7px;color:#f2f2f2;transform:scaleX(1.0094);">3D</span>
<span class="t" style="left:273.0px;top:4.79px;font-size:9.7px;color:#f2f2f2;transform:scaleX(1.0229);">View</span>
<span class="t" style="left:303.7px;top:4.79px;font-size:9.7px;color:#f2f2f2;">Plugins</span>
<span class="t" style="left:345.5px;top:4.79px;font-size:9.7px;color:#f2f2f2;transform:scaleX(1.0535);">Window</span>
<span class="t" style="left:392.2px;top:4.79px;font-size:9.7px;color:#f2f2f2;transform:scaleX(1.0189);">Help</span>
<span class="t" style="left:134.2px;top:29.96px;font-size:9.5px;color:#c8c8c8;transform:scaleX(0.8022);">X:</span>
<span class="t" style="left:148.5px;top:29.54px;font-size:10px;color:#e8e8e8;transform:scaleX(0.8082);">705.50 px</span>
<span class="t" style="left:216.5px;top:29.96px;font-size:9.5px;color:#c8c8c8;transform:scaleX(0.8282);">Y:</span>
<span class="t" style="left:231.2px;top:29.54px;font-size:10px;color:#e8e8e8;transform:scaleX(0.8196);">461.00 px</span>
<span class="t" style="left:279.2px;top:29.96px;font-size:9.5px;color:#c8c8c8;transform:scaleX(0.8571);">W:</span>
<span class="t" style="left:297.5px;top:29.54px;font-size:10px;color:#e8e8e8;transform:scaleX(0.7979);">100.00%</span>
<span class="t" style="left:361.7px;top:29.96px;font-size:9.5px;color:#c8c8c8;transform:scaleX(0.8211);">H:</span>
<span class="t" style="left:377.5px;top:29.54px;font-size:10px;color:#e8e8e8;transform:scaleX(0.7979);">100.00%</span>
<span class="t" style="left:437px;top:29.54px;font-size:10px;color:#e8e8e8;transform:scaleX(0.8118);">0.00</span>
<span class="t" style="left:493.2px;top:29.96px;font-size:9.5px;color:#c8c8c8;transform:scaleX(0.8211);">H:</span>
<span class="t" style="left:508.7px;top:29.54px;font-size:10px;color:#e8e8e8;transform:scaleX(0.8118);">0.00</span>
<span class="t" style="left:555.5px;top:29.96px;font-size:9.5px;color:#c8c8c8;transform:scaleX(0.8813);">V:</span>
<span class="t" style="left:570.5px;top:29.54px;font-size:10px;color:#e8e8e8;transform:scaleX(0.8118);">0.00</span>
<span class="t" style="left:624.2px;top:29.96px;font-size:9.5px;color:#c8c8c8;transform:scaleX(0.8921);">Interpolation:</span>
<span class="t" style="left:685px;top:30.04px;font-size:10px;color:#e8e8e8;transform:scaleX(0.8065);">Bicubic</span>
<span class="t" style="left:43.2px;top:55.53px;font-size:10px;color:#f0f0f0;font-weight:bold;transform:scaleX(0.9115);">editor-mockup-sleeve-black.psd @ 90% (Design, RGB/8) *</span>
<span class="t" style="left:46.7px;top:883.76px;font-size:9.5px;color:#e0e0e0;transform:scaleX(0.8678);">90%</span>
<span class="t" style="left:95px;top:883.76px;font-size:9.5px;color:#e0e0e0;transform:scaleX(0.8713);">11.75 in x 6.608 in (120 ppi)</span>
<span class="t" style="left:1213.8px;top:64.46px;font-size:9.5px;color:#f0f0f0;font-weight:bold;transform:scaleX(0.8992);">Navigator</span>
<span class="t" style="left:1210.5px;top:254.96px;font-size:9.5px;color:#6f6f6f;transform:scaleX(0.8152);">90%</span>
<span class="t" style="left:1213.5px;top:277.56px;font-size:9.5px;color:#f0f0f0;font-weight:bold;transform:scaleX(0.8161);">Layers</span>
<span class="t" style="left:1253px;top:277.56px;font-size:9.5px;color:#b4b4b4;transform:scaleX(0.8720);">Channels</span>
<span class="t" style="left:1302.7px;top:277.56px;font-size:9.5px;color:#b4b4b4;transform:scaleX(0.8933);">Paths</span>
<span class="t" style="left:1227.7px;top:305.96px;font-size:9.5px;color:#e4e4e4;transform:scaleX(0.8573);">Kind</span>
<span class="t" style="left:1216.6px;top:329.36px;font-size:9.5px;color:#e4e4e4;transform:scaleX(0.8493);">Normal</span>
<span class="t" style="left:1322.2px;top:329.36px;font-size:9.5px;color:#d0d0d0;transform:scaleX(0.8609);">Opacity:</span>
<span class="t" style="left:1360.6px;top:329.36px;font-size:9.5px;color:#e4e4e4;transform:scaleX(0.8437);">100%</span>
<span class="t" style="left:1211.5px;top:352.46px;font-size:9.5px;color:#d0d0d0;transform:scaleX(0.8368);">Lock:</span>
<span class="t" style="left:1340.6px;top:352.46px;font-size:9.5px;color:#d0d0d0;transform:scaleX(0.7919);">Fill:</span>
<span class="t" style="left:1360.6px;top:352.46px;font-size:9.5px;color:#e4e4e4;transform:scaleX(0.8437);">100%</span>
<span class="t" style="left:1268.7px;top:378.16px;font-size:9.5px;color:#f0f0f0;transform:scaleX(0.8556);">Design</span>
<span class="t" style="left:1268.7px;top:400.96px;font-size:9.5px;color:#e4e4e4;transform:scaleX(0.8492);">Cup</span>
<span class="t" style="left:1268.7px;top:424.46px;font-size:9.5px;color:#e4e4e4;transform:scaleX(0.8521);">Layer 1</span>
<span class="t" style="left:1181.5px;top:403.10px;font-size:15px;color:#dcdcdc;font-style:italic;font-family:'Liberation Serif',serif;transform:scaleX(1.4188);">A</span>
<span class="t" style="left:1454px;top:878.14px;font-size:12px;color:#e6e6e6;font-style:italic;transform:scaleX(1.0285);">fx</span>
<span class="t" style="left:73px;top:77.82px;font-size:7.3px;color:#9c9c9c;">0</span>
<span class="t" style="left:163px;top:77.82px;font-size:7.3px;color:#9c9c9c;">1</span>
<span class="t" style="left:253px;top:77.82px;font-size:7.3px;color:#9c9c9c;">2</span>
<span class="t" style="left:343px;top:77.82px;font-size:7.3px;color:#9c9c9c;">3</span>
<span class="t" style="left:433px;top:77.82px;font-size:7.3px;color:#9c9c9c;">4</span>
<span class="t" style="left:523px;top:77.82px;font-size:7.3px;color:#9c9c9c;">5</span>
<span class="t" style="left:613px;top:77.82px;font-size:7.3px;color:#9c9c9c;">6</span>
<span class="t" style="left:703px;top:77.82px;font-size:7.3px;color:#9c9c9c;">7</span>
<span class="t" style="left:793px;top:77.82px;font-size:7.3px;color:#9c9c9c;">8</span>
<span class="t" style="left:883px;top:77.82px;font-size:7.3px;color:#9c9c9c;">9</span>
<span class="t" style="left:973px;top:77.82px;font-size:7.3px;color:#9c9c9c;">10</span>
<span class="t" style="left:1063px;top:77.82px;font-size:7.3px;color:#9c9c9c;">11</span>
<span class="t" style="left:1153px;top:77.82px;font-size:7.3px;color:#9c9c9c;">12</span>
<span class="t" style="left:40px;top:124.32px;font-size:7.3px;color:#9c9c9c;">1</span>
<span class="t" style="left:40px;top:214.32px;font-size:7.3px;color:#9c9c9c;">0</span>
<span class="t" style="left:40px;top:304.32px;font-size:7.3px;color:#9c9c9c;">1</span>
<span class="t" style="left:40px;top:394.32px;font-size:7.3px;color:#9c9c9c;">2</span>
<span class="t" style="left:40px;top:484.32px;font-size:7.3px;color:#9c9c9c;">3</span>
<span class="t" style="left:40px;top:574.32px;font-size:7.3px;color:#9c9c9c;">4</span>
<span class="t" style="left:40px;top:664.32px;font-size:7.3px;color:#9c9c9c;">5</span>
<span class="t" style="left:40px;top:754.32px;font-size:7.3px;color:#9c9c9c;">6</span>
</body></html>
